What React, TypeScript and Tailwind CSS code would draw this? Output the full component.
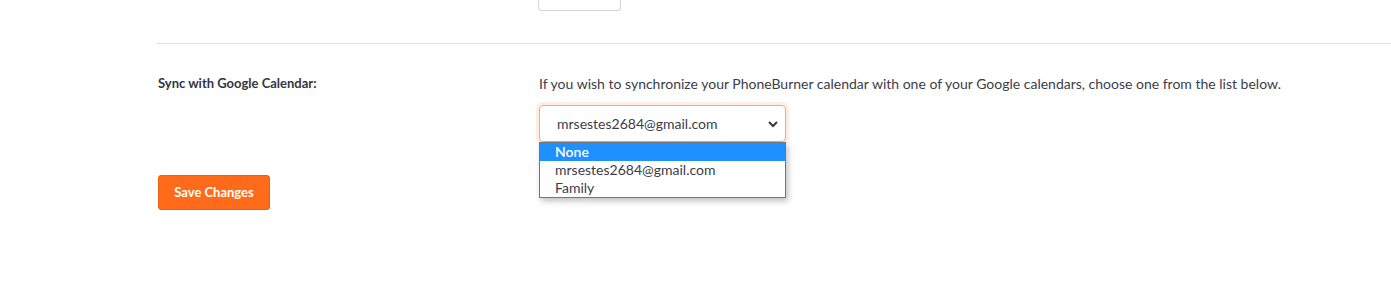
import React from "react";

const calendars = ["None", "mrsestes2684@gmail.com", "Family"];

export default function App() {
  return (
    <div className="relative h-[293px] w-full overflow-hidden bg-white font-['Lato','Open_Sans',sans-serif] text-[#3b3d4a]">
      {/* cut-off button from the section above */}
      <div className="ml-[538px] h-[11px] w-[83px] rounded-b-[4px] border-x border-b border-[#d4d4d4]" />

      {/* divider */}
      <div className="ml-[157px] mt-[32px] border-t border-[#e3e3e3]" />

      <div className="ml-[158px] mt-[31px] flex">
        <div className="w-[381px] text-[13px] font-bold leading-[16px] text-[#34363f]">
          Sync with Google Calendar:
        </div>
        <div className="flex flex-col">
          <p className="text-[14px] leading-[18px]">
            If you wish to synchronize your PhoneBurner calendar with one of your Google calendars, choose one from the list below.
          </p>
          <div className="relative mt-[12px] w-[247px]">
            <div className="flex h-[37px] items-center justify-between rounded-[4px] border border-[#f6a77c] pl-[17px] pr-[5px] text-[14px] text-[#3b3d4a] shadow-[0_0_0_3px_rgba(255,107,26,0.12)]">
              <span>mrsestes2684@gmail.com</span>
              <svg width="12" height="8" viewBox="0 0 12 8" className="mr-[1px]">
                <path d="M2 2l4 4 4-4" fill="none" stroke="#3a3a3a" strokeWidth="2" />
              </svg>
            </div>
            {/* open option list */}
            <ul className="absolute left-0 top-[37px] w-[247px] border border-[#767676] bg-white text-[14px] leading-[18px] shadow-[2px_3px_6px_rgba(0,0,0,0.25)]">
              {calendars.map((c, i) => (
                <li
                  key={c}
                  className={
                    i === 0
                      ? "bg-[#1e90ff] pl-[15px] font-semibold text-white"
                      : "pl-[15px] text-[#3b3d4a]"
                  }
                >
                  {c}
                </li>
              ))}
            </ul>
          </div>
        </div>
      </div>

      <button className="ml-[158px] mt-[33px] h-[35px] w-[112px] rounded-[3px] border border-[#ef5f10] bg-[#ff6b1a] text-[13px] font-bold text-white">
        Save Changes
      </button>
    </div>
  );
}
